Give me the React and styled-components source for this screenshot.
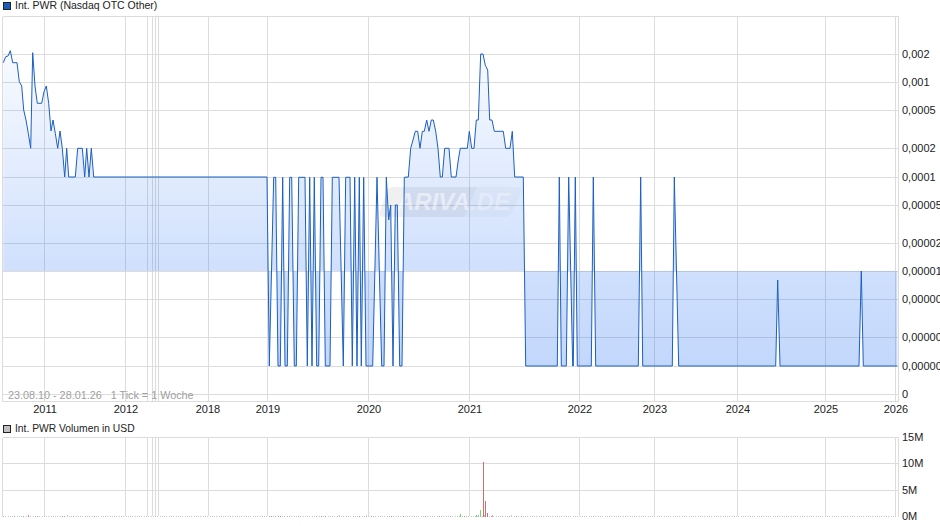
import React from "react";
import styled, { createGlobalStyle } from "styled-components";

const GlobalStyle = createGlobalStyle`
  html, body {
    margin: 0;
    padding: 0;
    background: #fff;
  }
  body {
    font-family: "Liberation Sans", Arial, sans-serif;
    overflow: hidden;
  }
`;

const Page = styled.div`
  width: 940px;
  height: 526px;
  display: flex;
  flex-direction: column;
  overflow: hidden;
`;

const Legend = styled.div`
  height: ${(p) => p.$height}px;
  padding-left: 3px;
  padding-top: ${(p) => p.$top}px;
  box-sizing: border-box;
  display: flex;
  align-items: flex-start;
  gap: 4px;
  font-size: ${(p) => p.$size}px;
  line-height: 11px;
  color: #222;
`;

const Swatch = styled.span`
  width: 6px;
  height: 6px;
  margin-top: 2px;
  border: 1px solid #222;
  background: ${(p) => p.$color};
`;

const ChartSvg = styled.svg`
  display: block;
  flex: none;
  overflow: visible;
  font-family: "Liberation Sans", Arial, sans-serif;
  font-size: 11px;
`;

const GridLine = styled.line`
  stroke: #dcdcdc;
  stroke-width: 1;
  shape-rendering: crispEdges;
`;

const TickLabel = styled.text`
  fill: #222;
`;

const RangeLabel = styled.text`
  fill: #a0a0a0;
  font-size: 10.8px;
`;

const PriceLine = styled.path`
  fill: none;
  stroke: #1c5fc2;
  stroke-width: 1;
  stroke-linejoin: round;
`;

const gridX = [44, 125, 147, 152, 155, 158, 208, 267, 368, 469, 579, 654, 737, 825, 895];

const yearLabels = [
  ["2011", 45], ["2012", 126], ["2018", 208], ["2019", 268], ["2020", 369], ["2021", 470],
  ["2022", 580], ["2023", 655], ["2024", 738], ["2025", 826], ["2026", 896],
];

const priceTicks = [
  ["0,002", 54], ["0,001", 82], ["0,0005", 110], ["0,0002", 148], ["0,0001", 177],
  ["0,00005", 205], ["0,00002", 243], ["0,00001", 271], ["0,00000", 299],
  ["0,00000", 337], ["0,00000", 366], ["0", 394],
];

const volumeTicks = [["15M", 437], ["10M", 463], ["5M", 490], ["0M", 516]];

const HI = 177;
const LO = 366;

// traced from 3x crops, x in crop pixels
const earlyRun = [
  [10,188],[17,170],[24,168],[31,152],[38,188],[51,188],[58,245],[65,258],[71,330],[78,360],
  [85,400],[92,445],[98,158],[105,258],[112,310],[125,310],[132,275],[139,258],[146,310],
  [153,393],[159,360],[166,400],[173,445],[180,393],[187,445],[194,531],[200,445],[206,531],
  [226,531],[233,445],[247,445],[254,531],[260,445],[267,531],[274,445],[281,531],[801,531],
].map(([x, y]) => [x / 3, y / 3]);

const flipRun = [
  [28,618],[41,52],[47,52],[54,618],[61,618],[68,52],[75,618],[82,618],[89,52],[95,52],[103,618],
  [109,618],[116,52],[135,52],[142,618],[149,52],[156,618],[163,52],[170,618],[176,618],[183,52],
  [189,52],[196,618],[210,618],[217,52],[237,52],[250,618],[257,52],[270,52],[277,618],[284,52],
  [291,618],[298,52],[304,618],[311,52],[318,618],[338,618],[351,52],[365,618],[372,618],[379,52],
  [386,180],[392,135],[399,618],[406,135],[412,135],[419,618],[426,618],[433,52],
].map(([x, y]) => [260 + x / 3, 160 + y / 3]);

const bumpRun = [
  [85,411],[92,325],[99,300],[106,274],[113,274],[120,325],[127,274],[133,274],[140,240],[147,274],
  [154,240],[160,240],[167,274],[174,325],[181,411],[187,411],[194,325],[207,325],[214,411],[228,411],
  [235,360],[241,325],[262,325],[268,274],[275,325],[282,325],[289,240],[295,240],[302,42],[309,42],
  [316,76],[323,90],[329,240],[336,240],[343,274],[370,274],[377,325],[390,325],[397,274],[404,411],
  [430,411],
].map(([x, y]) => [380 + x / 3, 40 + y / 3]);

const lateRun = [
  [17,LO],[112,LO],[118,HI],[124,LO],[139,LO],[146,HI],[158,LO],[160,LO],[166,HI],[172,LO],[214,LO],
  [220,HI],[227,LO],[355,LO],[362,HI],[368,LO],[457,LO],[463,HI],[476,LO],
].map(([x, y]) => [520 + x / 3, y]);

const tailRun = [
  [47,LO],[53,280],[60,LO],[297,LO],[304,271],[310,LO],[412,LO],
].map(([x, y]) => [760 + x / 3, y]);

const pricePoints = [...earlyRun, ...flipRun, ...bumpRun, ...lateRun, ...tailRun];

const BASELINE = 271;
const linePath = pricePoints.map(([x, y], i) => `${i ? "L" : "M"}${x.toFixed(1)} ${y.toFixed(1)}`).join(" ");
const firstX = pricePoints[0][0];
const lastX = pricePoints[pricePoints.length - 1][0];
const areaPath = `M${firstX.toFixed(1)} ${BASELINE} ${linePath.replace("M", "L")} L${lastX.toFixed(1)} ${BASELINE} Z`;

const bigBars = [
  [483, 462, "#cc6f72"], [485, 501, "#cc6f72"], [487, 513, "#cc6f72"], [460, 514, "#66dd66"],
  [480, 510, "#66dd66"], [476, 515, "#66dd66"], [478, 515, "#bdbdbd"], [492, 515, "#d0b0b0"],
];

// thin volume ticks along the zero line
function smallBars() {
  const out = [];
  let seed = 17;
  for (let x = 3; x < 896; x += 2.27) {
    seed = (seed * 137 + 71) % 1009;
    const busy = x < 100 || (x > 267 && x < 525);
    let color = "#c8c8c8";
    if (busy && seed % 5 === 0) color = "#dc8a8a";
    if (busy && seed % 7 === 0) color = "#7ade7a";
    const h = busy && seed % 9 === 0 ? 2 : 1;
    out.push([Math.round(x), h, color]);
  }
  return out;
}

function VerticalGrid({ top, bottom }) {
  return gridX.map((x) => <GridLine key={x} x1={x + 0.5} x2={x + 0.5} y1={top} y2={bottom} />);
}

function Frame({ top, bottom }) {
  return (
    <>
      <GridLine x1={2.5} x2={2.5} y1={top} y2={bottom} />
      <GridLine x1={898.5} x2={898.5} y1={top} y2={bottom} />
      <GridLine x1={2.5} x2={898.5} y1={top} y2={top} />
    </>
  );
}

function Watermark() {
  return (
    <g>
      <path d="M392 187 H477 L464 217 H384 Q378 217 380 211 L386 193 Q388 187 392 187 Z" fill="#000" opacity="0.06" />
      <path d="M477 187 H518 Q524 187 521 193 L513 211 Q510 217 504 217 H464 Z" fill="#000" opacity="0.025" />
      <text x="397" y="210" fontSize="24" fontWeight="bold" fontStyle="italic" fill="#fff">
        <tspan opacity="0.5">ARIVA</tspan>
        <tspan opacity="0.3">.DE</tspan>
      </text>
    </g>
  );
}

function PriceChart() {
  return (
    <ChartSvg width="940" height="400" viewBox="0 16 940 400">
      <defs>
        <linearGradient id="priceFill" gradientUnits="userSpaceOnUse" x1="0" y1="50" x2="0" y2="366">
          <stop offset="0" stopColor="#1f6cf5" stopOpacity="0.03" />
          <stop offset="0.69" stopColor="#1f6cf5" stopOpacity="0.21" />
          <stop offset="1" stopColor="#1f6cf5" stopOpacity="0.27" />
        </linearGradient>
      </defs>
      <Frame top={16.5} bottom={401.5} />
      <VerticalGrid top={16} bottom={401} />
      {priceTicks.map(([label, y]) => (
        <GridLine key={y} x1={3} x2={898} y1={y + 0.5} y2={y + 0.5} />
      ))}
      <GridLine x1={2.5} x2={898.5} y1={401.5} y2={401.5} />
      <path d={areaPath} fill="url(#priceFill)" />
      <Watermark />
      <PriceLine d={linePath} />
      <RangeLabel x="8" y="399">23.08.10 - 28.01.26{"\u00a0\u00a0\u00a0"}1 Tick = 1 Woche</RangeLabel>
      {priceTicks.map(([label, y]) => (
        <TickLabel key={y} x="902" y={y + 4}>{label}</TickLabel>
      ))}
      {yearLabels.map(([label, x]) => (
        <TickLabel key={label} x={x} y="413" textAnchor="middle">{label}</TickLabel>
      ))}
    </ChartSvg>
  );
}

function VolumeChart() {
  return (
    <ChartSvg width="940" height="90" viewBox="0 436 940 90">
      <Frame top={437.5} bottom={516.5} />
      <VerticalGrid top={437} bottom={516} />
      {volumeTicks.slice(1, 3).map(([label, y]) => (
        <GridLine key={label} x1={3} x2={898} y1={y + 0.5} y2={y + 0.5} />
      ))}
      {smallBars().map(([x, h, color], i) => (
        <rect key={i} x={x} y={517 - h} width="1" height={h} fill={color} />
      ))}
      {bigBars.map(([x, top, color]) => (
        <rect key={x} x={x} y={top} width="1" height={517 - top} fill={color} />
      ))}
      {volumeTicks.map(([label, y]) => (
        <TickLabel key={label} x="902" y={y + 4}>{label}</TickLabel>
      ))}
    </ChartSvg>
  );
}

export default function App() {
  return (
    <Page>
      <GlobalStyle />
      <Legend $height={16} $top={0} $size={10.5}>
        <Swatch $color="#1a5cc0" />
        Int. PWR (Nasdaq OTC Other)
      </Legend>
      <PriceChart />
      <Legend $height={20} $top={7} $size={10.3}>
        <Swatch $color="#c0c0c0" />
        Int. PWR Volumen in USD
      </Legend>
      <VolumeChart />
    </Page>
  );
}
